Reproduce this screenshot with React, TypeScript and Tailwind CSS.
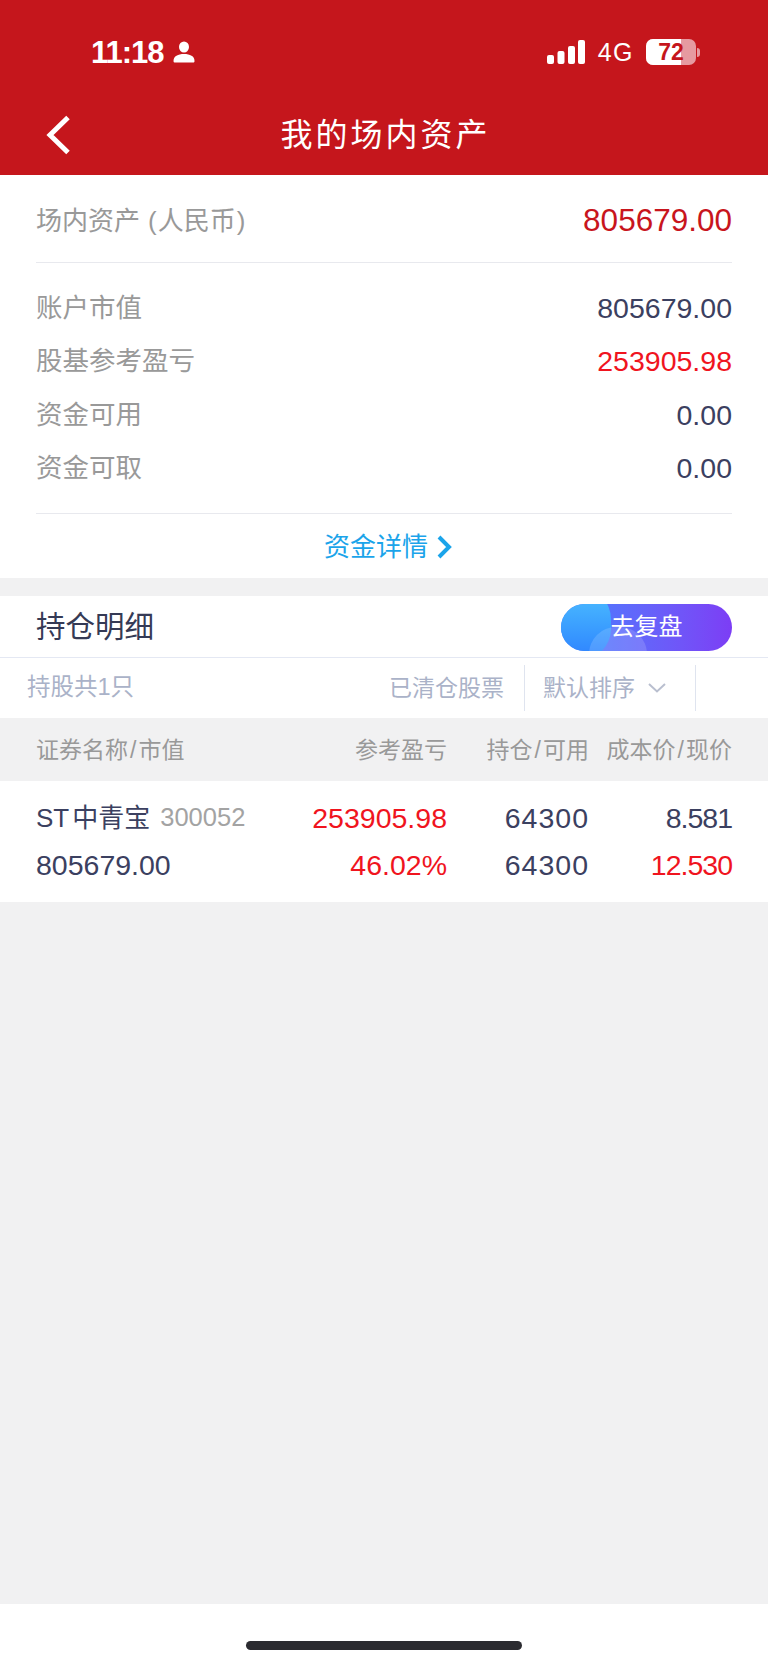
import React from "react";

const sans = "font-['Liberation_Sans','Noto_Sans_CJK_SC',sans-serif]";

function Row({ label, value, red }: { label: string; value: string; red?: boolean }) {
  return (
    <div className="flex h-[53.5px] items-center justify-between">
      <span className="text-[26.500px] leading-none text-[#999999]">{label}</span>
      <span className={`text-[28.500px] leading-none ${red ? "text-[#f0141e]" : "text-[#3b4060]"}`}>{value}</span>
    </div>
  );
}

function Pair({ a, b }: { a: string; b: string }) {
  return (
    <span>
      {a}
      <span className="mx-[2px]">/</span>
      {b}
    </span>
  );
}

export default function App() {
  return (
    <div className={`flex h-[1665px] w-[768px] flex-col overflow-hidden bg-[#f1f1f2] ${sans}`}>
      <header className="h-[175px] shrink-0 bg-[#c5161c] text-white">
        <div className="flex h-[106px] items-start justify-between pl-[91px] pr-[68px] pt-[32px]">
          <div className="flex h-[40px] items-center">
            <span className="text-[31px] font-bold leading-none tracking-[-1px]">11:18</span>
            <svg className="ml-[9px]" width="22" height="22" viewBox="0 0 22 22" fill="white">
              <ellipse cx="11" cy="6" rx="5" ry="5.500" />
              <path d="M0.500 20c0-5 4.500-7 10.500-7s10.500 2 10.500 7c0 1-.500 1.500-1.500 1.500H2c-1 0-1.500-.500-1.500-1.500z" />
            </svg>
          </div>
          <div className="flex h-[40px] items-center">
            <svg width="38" height="24" viewBox="0 0 38 24" fill="white">
              <rect x="0" y="15" width="7" height="9" rx="2" />
              <rect x="10.500" y="11" width="7" height="13" rx="2" />
              <rect x="21" y="6" width="7" height="18" rx="2" />
              <rect x="31" y="0" width="7" height="24" rx="2" />
            </svg>
            <span className="ml-[13px] text-[25px] leading-none tracking-[1.500px]">4G</span>
            <div className="relative ml-[12px] h-[26px] w-[50px] overflow-hidden rounded-[7px] bg-[#e69aa0]">
              <div className="absolute inset-y-0 left-0 w-[35px] bg-white" />
              <span className="absolute inset-0 flex items-center justify-center text-[23px] font-bold leading-none text-[#c5161c]">72</span>
            </div>
            <div className="ml-[1px] h-[9px] w-[3px] rounded-r-full bg-[#e69aa0]" />
          </div>
        </div>
        <div className="relative flex h-[69px] items-center justify-center pb-[12px]">
          <svg className="absolute left-[46px] top-[9px]" width="26" height="40" viewBox="0 0 26 40" fill="none" stroke="white" strokeWidth="5">
            <path d="M22 2.500 4 20l18 17.500" />
          </svg>
          <span className="pl-[3px] text-[32px] leading-none tracking-[3px]">我的场内资产</span>
        </div>
      </header>

      <section className="h-[403px] shrink-0 bg-white px-[36px]">
        <div className="flex h-[88px] items-center justify-between border-b border-[#e8e9ee] pt-[4px]">
          <span className="text-[26px] leading-none text-[#999999]">
            场内资产<span className="ml-[8px] mr-[1px]">(</span>人民币<span className="ml-[1px]">)</span>
          </span>
          <span className="text-[31.500px] leading-none text-[#c8151d]">805679.00</span>
        </div>
        <div className="flex h-[251px] flex-col justify-center border-b border-[#e8e9ee]">
          <Row label="账户市值" value="805679.00" />
          <Row label="股基参考盈亏" value="253905.98" red />
          <Row label="资金可用" value="0.00" />
          <Row label="资金可取" value="0.00" />
        </div>
        <div className="flex h-[63px] items-center justify-center gap-[8px] pl-[8px] pt-[2px] text-[#1ba4ea]">
          <span className="text-[26px] leading-none">资金详情</span>
          <svg width="16" height="24" viewBox="0 0 16 24" fill="none" stroke="#1ba4ea" strokeWidth="4">
            <path d="M3 2l10 10L3 22" />
          </svg>
        </div>
      </section>

      <section className="mt-[18px] shrink-0 bg-white">
        <div className="flex h-[62px] items-center justify-between border-b border-[#e4e8f3] px-[36px] pt-[1px]">
          <span className="text-[29.500px] leading-none text-[#353a55]">持仓明细</span>
          <div className="relative flex h-[47px] w-[171px] items-center justify-center overflow-hidden rounded-full bg-gradient-to-r from-[#3a80ff] to-[#7c3df5]">
            <div className="absolute left-[-12px] top-[-16px] h-[72px] w-[62px] rounded-full bg-gradient-to-b from-[#4fc0ff] to-[#2f80ff]" />
            <div className="absolute bottom-[-30px] left-[28px] h-[54px] w-[58px] rounded-full bg-white opacity-15" />
            <span className="relative text-[24px] leading-none text-white">去复盘</span>
          </div>
        </div>
        <div className="flex h-[60px] items-center text-[23px] leading-none text-[#aab2c8]">
          <span className="ml-[27px] text-[23.500px]">持股共1只</span>
          <span className="ml-auto">已清仓股票</span>
          <div className="ml-[20px] flex h-[46px] w-[172px] items-center border-x border-[#dfe4ef] pl-[18px]">
            <span>默认排序</span>
            <svg className="ml-[13px]" width="18" height="10" viewBox="0 0 18 10" fill="none" stroke="#b9bfcf" strokeWidth="2">
              <path d="M1 1l8 7.500L17 1" />
            </svg>
          </div>
          <div className="w-[72px]" />
        </div>
      </section>

      <div className="flex h-[63px] shrink-0 items-center px-[36px] pt-[1px] text-[23px] leading-none text-[#999999]">
        <span className="w-[224px]">
          <Pair a="证券名称" b="市值" />
        </span>
        <span className="w-[187px] text-right">参考盈亏</span>
        <span className="w-[142px] text-right">
          <Pair a="持仓" b="可用" />
        </span>
        <span className="flex-1 text-right">
          <Pair a="成本价" b="现价" />
        </span>
      </div>

      <section className="flex h-[121px] shrink-0 flex-col justify-center gap-[1px] bg-white px-[36px] text-[28.500px] leading-none text-[#3b4060]">
        <div className="flex h-[46px] items-center">
          <div className="flex w-[224px] items-center">
            <span className="whitespace-nowrap text-[26px]">
              ST<span className="ml-[3px]">中青宝</span>
            </span>
            <span className="ml-[10px] text-[25.500px] text-[#a3a3a3]">300052</span>
          </div>
          <span className="w-[187px] text-right text-[#f0141e]">253905.98</span>
          <span className="w-[142px] text-right tracking-[1px]">64300</span>
          <span className="flex-1 text-right tracking-[-1px]">8.581</span>
        </div>
        <div className="flex h-[46px] items-center">
          <span className="w-[224px]">805679.00</span>
          <span className="w-[187px] text-right text-[#f0141e]">46.02%</span>
          <span className="w-[142px] text-right tracking-[1px]">64300</span>
          <span className="flex-1 text-right tracking-[-1px] text-[#f0141e]">12.530</span>
        </div>
      </section>

      <div className="flex-1" />

      <footer className="flex h-[61px] shrink-0 items-start justify-center bg-white pt-[37px]">
        <div className="h-[9px] w-[276px] rounded-full bg-[#2b2b30]" />
      </footer>
    </div>
  );
}
